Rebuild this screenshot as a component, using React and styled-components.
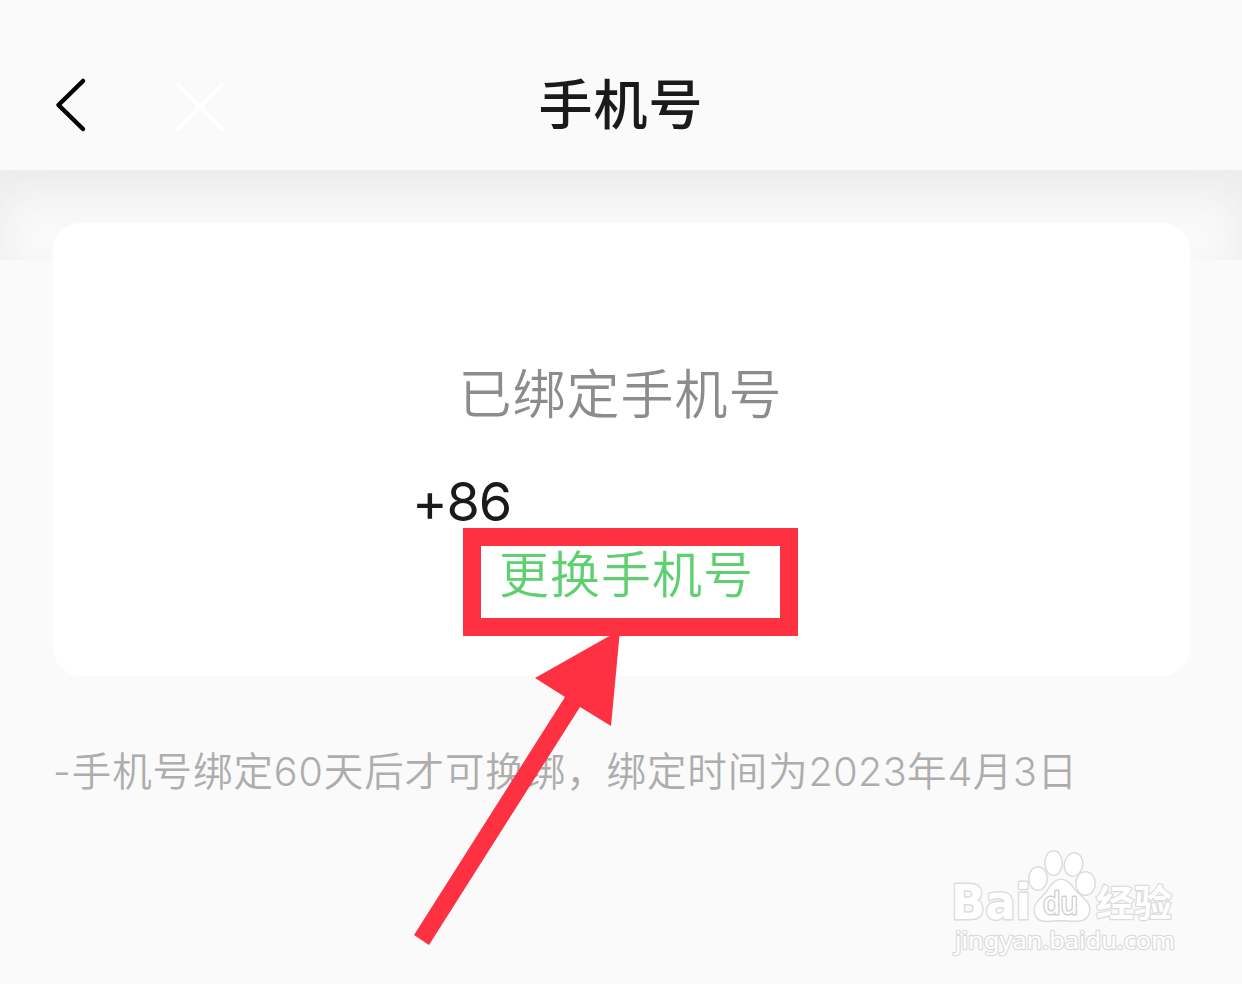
import React from "react";
import styled, { createGlobalStyle } from "styled-components";

const GlobalStyle = createGlobalStyle`
  * { box-sizing: border-box; }
  body { margin: 0; background: #fafafa; }
`;

const Page = styled.div`
  position: relative;
  width: 1242px;
  height: 984px;
  overflow: hidden;
  background: #fafafa;
  font-family: Inter, "Noto Sans CJK SC", sans-serif;
  color: #1a1a1a;
`;

const Header = styled.header`
  display: grid;
  grid-template-columns: 300px 1fr 300px;
  align-items: center;
  height: 170px;
  padding-top: 40px;
`;

const HeaderIcons = styled.div`
  display: flex;
  align-items: center;
  gap: 86px;
  padding-left: 54px;
`;

const Title = styled.h1`
  margin: 0;
  padding-top: 2px;
  text-align: center;
  font-size: 54px;
  line-height: 80px;
  font-weight: 500;
  letter-spacing: 1px;
`;

const Body = styled.main`
  padding: 53px 52px 0 53px;
`;

const HeaderShade = styled.div`
  height: 90px;
  margin-bottom: -90px;
  box-shadow: inset 0 23px 44px #ebebeb;
`;

const Card = styled.section`
  position: relative;
  display: flex;
  flex-direction: column;
  align-items: center;
  height: 453px;
  padding-top: 132px;
  border-radius: 28px;
  background: #fff;
`;

const Label = styled.div`
  margin-right: 2px;
  font-size: 53px;
  line-height: 80px;
  letter-spacing: 1px;
  font-weight: 350;
  color: #8c8c8c;
`;

const Phone = styled.div`
  align-self: flex-start;
  margin: 35px 0 0 359px;
  font-size: 54px;
  line-height: 64px;
  letter-spacing: -1.2px;
`;

const ChangeLink = styled.a`
  position: relative;
  margin-left: 10px;
  padding-top: 1px;
  font-size: 50px;
  line-height: 80px;
  letter-spacing: 1px;
  font-weight: 350;
  color: #5fd070;
`;

const Highlight = styled.span`
  position: absolute;
  left: -36px;
  top: -6px;
  width: 335px;
  height: 108px;
  border: 18px solid #fd3142;
`;

const Note = styled.p`
  margin: 66px 0 0;
  font-size: 39.5px;
  line-height: 60px;
  letter-spacing: 0.9px;
  font-weight: 350;
  white-space: nowrap;
  color: #adadad;
`;

const Digits = styled.span`
  letter-spacing: 0.4px;
`;

const Arrow = styled.svg`
  position: absolute;
  left: 400px;
  top: 620px;
`;

const Watermark = styled.svg`
  position: absolute;
  left: 940px;
  top: 840px;
`;

const BackIcon = () => (
  <svg width="34" height="56" viewBox="0 0 34 56" fill="none" stroke="#000" strokeWidth="4.5" strokeLinecap="round" strokeLinejoin="round">
    <path d="M29 4 L4.500 28 L29 52" />
  </svg>
);

const CloseIcon = () => (
  <svg width="52" height="52" viewBox="0 0 52 52" fill="none" stroke="#fff" strokeWidth="4" strokeLinecap="round">
    <path d="M4 6 L48 50 M48 6 L4 50" />
  </svg>
);

const BaiduMark = () => (
  <Watermark width="250" height="130" viewBox="0 0 250 130" fill="#fff" stroke="#dcdcdc" strokeWidth="3" strokeLinejoin="round" paintOrder="stroke">
    <text x="11" y="79" fontSize="48" fontFamily="'DejaVu Sans', sans-serif" fontWeight="700" textLength="80" lengthAdjust="spacingAndGlyphs">Bai</text>
    <g strokeWidth="3">
      <ellipse cx="98" cy="38.500" rx="8.500" ry="11" />
      <ellipse cx="113.500" cy="23" rx="8" ry="11.500" />
      <ellipse cx="133.500" cy="24.500" rx="8.500" ry="11" transform="rotate(10 133.500 24.500)" />
      <ellipse cx="145.500" cy="43.500" rx="9" ry="11" />
      <path d="M121 40 C129 40 132 48 137 53 C144 59 150 64 149 71 C147 84 133 80 121 80 C109 80 97 84 95 72 C94 64 100 60 107 52 C111 47 114 40 121 40 Z" />
    </g>
    <text x="103" y="74" fontSize="30" fontFamily="'DejaVu Sans', sans-serif" stroke="#cfcfcf" textLength="35" lengthAdjust="spacingAndGlyphs">du</text>
    <text x="156" y="77" fontSize="37" fontWeight="700" strokeWidth="2.500" fontFamily="'Noto Sans CJK SC', sans-serif" textLength="76" lengthAdjust="spacingAndGlyphs">经验</text>
    <text x="15" y="109" fontSize="24" strokeWidth="2.500" fontFamily="'Noto Sans', sans-serif" textLength="220" lengthAdjust="spacingAndGlyphs">jingyan.baidu.com</text>
  </Watermark>
);

export default function App() {
  return (
    <Page>
      <GlobalStyle />
      <Header>
        <HeaderIcons>
          <BackIcon />
          <CloseIcon />
        </HeaderIcons>
        <Title>手机号</Title>
      </Header>
      <HeaderShade />
      <Body>
        <Card>
          <Label>已绑定手机号</Label>
          <Phone>+86</Phone>
          <ChangeLink>
            更换手机号
            <Highlight />
          </ChangeLink>
        </Card>
        <Note>
          -手机号绑定60天后才可换绑，绑定时间为<Digits>2023</Digits>年<Digits>4</Digits>月<Digits>3</Digits>日
        </Note>
      </Body>
      <Arrow width="240" height="340" viewBox="0 0 240 340" fill="#fd3142">
        <path d="M220 10 L211 106 L180 87 L29 325 L14 315 L165 77 L135 58 Z" />
      </Arrow>
      <BaiduMark />
    </Page>
  );
}
